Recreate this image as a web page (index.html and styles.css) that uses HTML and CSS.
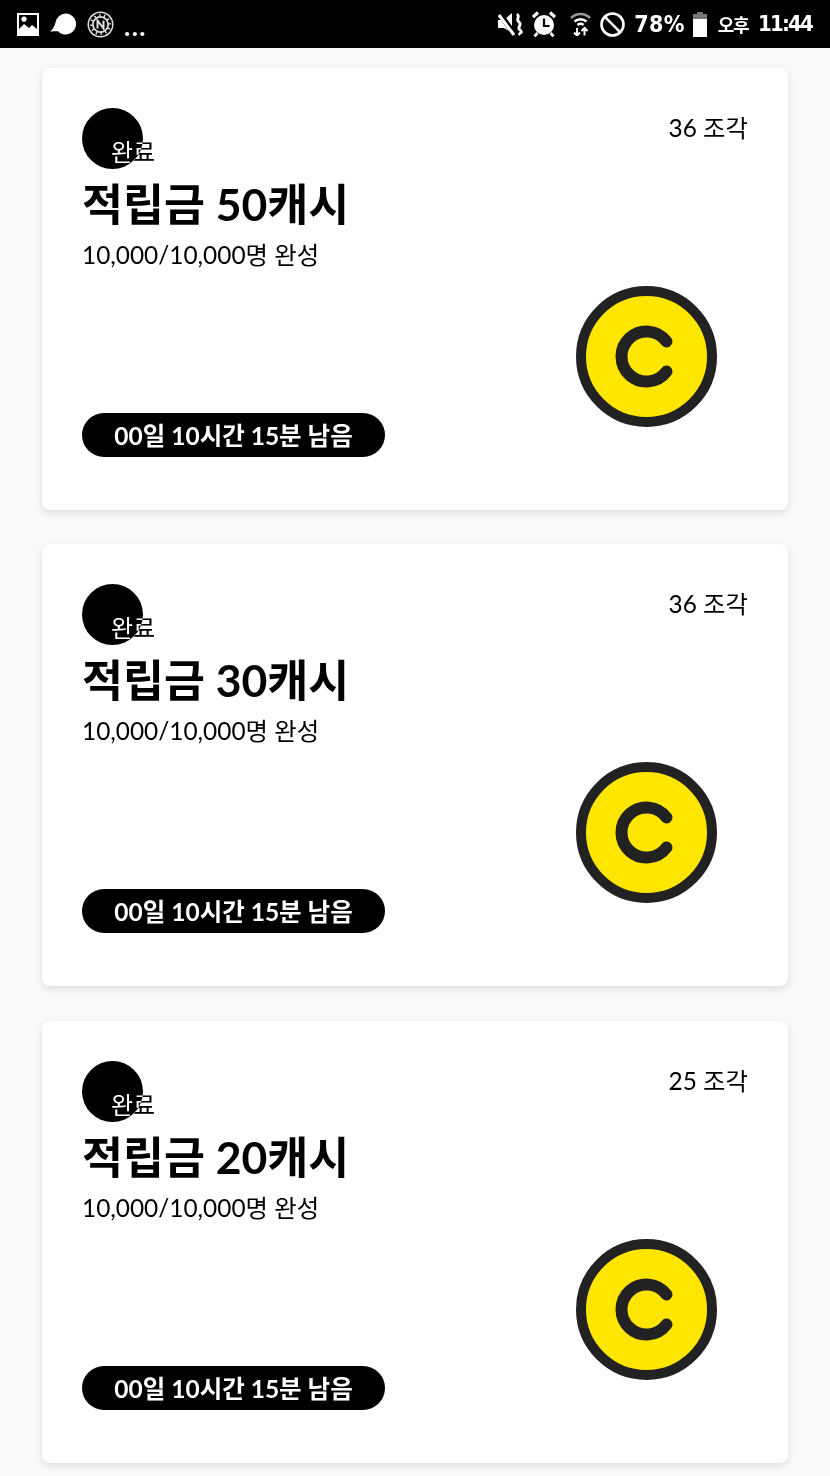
FILE: index.html
```html
<!DOCTYPE html>
<html lang="ko">
<head>
<meta charset="utf-8">
<title>적립금</title>
<link rel="stylesheet" href="styles.css">
</head>
<body>
<svg class="defs" width="0" height="0" aria-hidden="true">
  <symbol id="coin" viewBox="0 0 141 141">
    <circle cx="70.500" cy="70.500" r="65.500" fill="#ffe600" stroke="#222" stroke-width="10"/>
    <path d="M90.500 55.500A25 25 0 1 0 90.500 85.500" fill="none" stroke="#222" stroke-width="12" stroke-linecap="round"/>
  </symbol>
</svg>
<header class="status">
  <div class="status-left">
    <svg class="ic" width="22" height="23" viewBox="0 0 22 23"><path fill="#fff" fill-rule="evenodd" d="M0 0h22v23H0zM2 2v14l5-5 5 4 3-3 5 4V2zM7 3.500a2.700 2.700 0 1 1-.01 0z"/></svg>
    <svg class="ic bubble" width="26" height="22" viewBox="0 0 26 22"><path fill="#fff" d="M15.500 0.500a10.500 10.500 0 1 1-7.500 17.800Q4.500 18 0 18.500q4-3 5.500-9A10.500 10.500 0 0 1 15.500 0.500z"/></svg>
    <svg class="ic nmark" width="27" height="27" viewBox="0 0 27 27"><circle cx="13.500" cy="13.500" r="13" fill="#ddd"/><circle cx="13.500" cy="13.500" r="11" fill="none" stroke="#000" stroke-width="1"/><circle cx="13.500" cy="13.500" r="9.800" fill="none" stroke="#000" stroke-width="3" stroke-dasharray="3.500 1.600"/><circle cx="13.500" cy="13.500" r="7.500" fill="#000" stroke="#ddd" stroke-width="1.500"/><path d="M10.500 17.500v-8l6 8v-8" fill="none" stroke="#ddd" stroke-width="2"/></svg>
    <span class="dots">...</span>
  </div>
  <div class="status-right">
    <svg class="ic" width="26" height="25" viewBox="0 0 26 25"><path fill="#fff" d="M0 8h6l8-7v20L6 16H0z"/><path d="M2 2l15 21" stroke="#000" stroke-width="5.500"/><path d="M1 3l15 20" stroke="#fff" stroke-width="3"/><path d="M19 2c4 3-2 5 2 8s-3 5 1 8-2 3 0 5" fill="none" stroke="#fff" stroke-width="2.800"/></svg>
    <svg class="ic m8" width="24" height="26" viewBox="0 0 24 26"><circle cx="12" cy="14" r="10" fill="#fff"/><path d="M12 7.500V15h5.500" fill="none" stroke="#000" stroke-width="2.200"/><path d="M1 6l5-4.500M23 6l-5-4.500" stroke="#fff" stroke-width="3.200"/><path d="M5.500 22l-3 3.500M18.500 22l3 3.500" stroke="#fff" stroke-width="2.800"/></svg>
    <svg class="ic m14" width="21" height="24" viewBox="0 0 21 24"><path d="M1 6a13.500 13.500 0 0 1 19 0" fill="none" stroke="#999" stroke-width="2.500"/><path d="M4.500 9.500a9 9 0 0 1 12 0M7.500 13a4.500 4.500 0 0 1 6 0" fill="none" stroke="#fff" stroke-width="2.500"/><path d="M7 16v7.500M4 20.500l3 3 3-3M14.500 23.500V16M11.500 19l3-3 3 3" fill="none" stroke="#fff" stroke-width="2"/></svg>
    <svg class="ic m9" width="25" height="25" viewBox="0 0 25 25"><circle cx="12.500" cy="12.500" r="11" fill="none" stroke="#fff" stroke-width="2.600"/><path d="M4.700 4.700l15.600 15.600" stroke="#fff" stroke-width="2.600"/></svg>
    <span class="pct m9">78%</span>
    <svg class="ic m7" width="16" height="25" viewBox="0 0 16 25"><path fill="#777" d="M5 0h6v2h4v6H1V2h4z"/><path fill="#fff" d="M1 7h14v18H1z"/></svg>
    <span class="ampm">오후</span>
    <span class="clock">11:44</span>
  </div>
</header>
<main class="list">
  <article class="card">
    <div class="info">
      <div class="badge"><span class="badge-text">완료</span></div>
      <h2 class="title">적립금 50캐시</h2>
      <p class="sub">10,000/10,000명 완성</p>
      <div class="pill">00일 10시간 15분 남음</div>
    </div>
    <div class="side">
      <span class="count">36 조각</span>
      <svg class="coin"><use href="#coin"/></svg>
    </div>
  </article>
  <article class="card">
    <div class="info">
      <div class="badge"><span class="badge-text">완료</span></div>
      <h2 class="title">적립금 30캐시</h2>
      <p class="sub">10,000/10,000명 완성</p>
      <div class="pill">00일 10시간 15분 남음</div>
    </div>
    <div class="side">
      <span class="count">36 조각</span>
      <svg class="coin"><use href="#coin"/></svg>
    </div>
  </article>
  <article class="card">
    <div class="info">
      <div class="badge"><span class="badge-text">완료</span></div>
      <h2 class="title">적립금 20캐시</h2>
      <p class="sub">10,000/10,000명 완성</p>
      <div class="pill">00일 10시간 15분 남음</div>
    </div>
    <div class="side">
      <span class="count">25 조각</span>
      <svg class="coin"><use href="#coin"/></svg>
    </div>
  </article>
</main>
</body>
</html>
```
FILE: styles.css
```css
* { box-sizing: border-box; }
html, body { margin: 0; padding: 0; }
body {
  width: 830px;
  height: 1476px;
  overflow: hidden;
  background: #fafafa;
  color: #000;
  font-family: Lato, "Noto Sans CJK KR", sans-serif;
}
.defs { display: block; height: 0; }
.status {
  height: 48px;
  background: #000;
  color: #fff;
  display: flex;
  justify-content: space-between;
  align-items: center;
  padding: 0 18px 0 17px;
}
.status-left, .status-right { display: flex; align-items: center; }
.ic { display: block; flex: none; }
.bubble { margin-left: 11px; }
.nmark { margin-left: 11px; }
.m7 { margin-left: 7px; }
.m8 { margin-left: 8px; }
.m9 { margin-left: 9px; }
.m14 { margin-left: 14px; }
.dots { margin-left: 10px; font-size: 26px; font-weight: 700; line-height: 24px; letter-spacing: 1.500px; padding-top: 3px; }
.pct { font-size: 23px; font-weight: 700; font-family: "DejaVu Sans Condensed", "DejaVu Sans", sans-serif; line-height: 26px; letter-spacing: .4px; }
.ampm { margin-left: 10px; font-size: 18px; font-weight: 700; font-family: "Noto Sans CJK KR", sans-serif; line-height: 26px; letter-spacing: -1.500px; }
.clock { margin-left: 10px; font-size: 22px; font-weight: 700; font-family: "DejaVu Sans Condensed", "DejaVu Sans", sans-serif; line-height: 26px; letter-spacing: -1.800px; }
.list {
  padding: 19.800px 42px 0;
  display: flex;
  flex-direction: column;
  gap: 34.300px;
}
.card {
  height: 442.200px;
  background: #fff;
  border-radius: 8px;
  box-shadow: 0 3px 8px rgba(0, 0, 0, .12);
  padding: 40px 40px 53px;
  display: flex;
  justify-content: space-between;
}
.info { display: flex; flex-direction: column; align-items: flex-start; }
.badge {
  width: 61px;
  height: 61px;
  border-radius: 50%;
  background: #000;
  padding: 29px 0 0 29px;
  flex: none;
}
.badge-text {
  display: block;
  white-space: nowrap;
  color: #fff;
  mix-blend-mode: difference;
  font-size: 24px;
  line-height: 30px;
}
.title {
  margin: 2px 0 0;
  font-size: 44.500px;
  font-weight: 700;
  line-height: 66px;
  white-space: nowrap;
}
.sub {
  margin: 1px 0 0;
  font-size: 24.400px;
  line-height: 34px;
  white-space: nowrap;
}
.pill {
  margin-top: auto;
  width: 303px;
  height: 44px;
  border-radius: 22px;
  background: #000;
  color: #fff;
  font-size: 24.500px;
  font-weight: 700;
  line-height: 45px;
  text-align: center;
  white-space: nowrap;
}
.side { display: flex; flex-direction: column; align-items: flex-end; justify-content: space-between; }
.count { font-size: 24.400px; line-height: 40px; white-space: nowrap; }
.coin { width: 141px; height: 141px; margin: 0 31px 30.200px 0; display: block; }
```
